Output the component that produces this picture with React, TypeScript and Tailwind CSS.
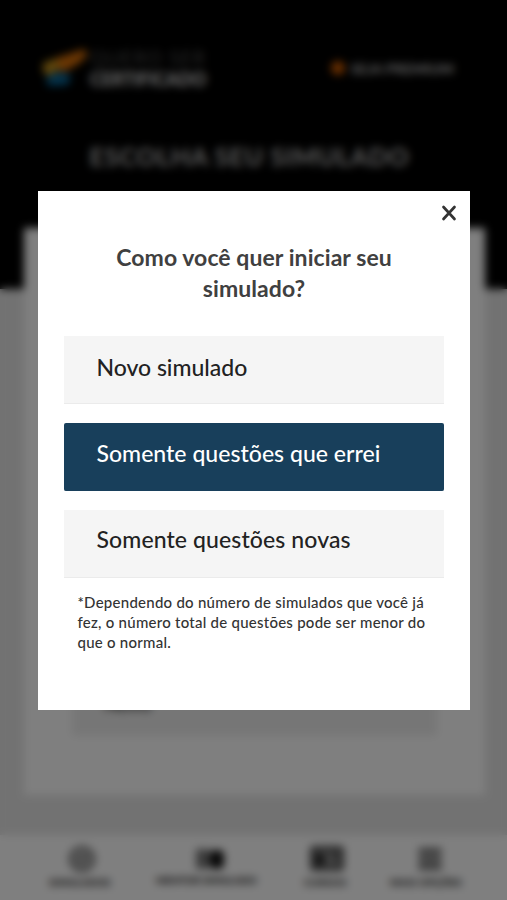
import clsx from "clsx";
import { CircleCheck, Menu } from "lucide-react";

const options = [
  { label: "Novo simulado", spacing: "tracking-[-0.02px]", offset: "pb-1" },
  { label: "Somente questões que errei", spacing: "tracking-[0.03px]", offset: "pb-1.5", active: true },
  { label: "Somente questões novas", spacing: "tracking-[0.11px]", offset: "pb-2" },
];

function Logo() {
  return (
    <div className="flex items-center gap-0.5">
      <svg width="46" height="40" viewBox="0 0 46 40">
        <path d="M1 15L15 10L19 20L7 28L1 24Z" fill="#c08d18" />
        <path d="M14 10L42 1L46 6L38 15L20 25Z" fill="#d86f08" />
        <path d="M4 29L16 24L29 27L26 37L6 38Z" fill="#086596" />
      </svg>
      <div className="w-[118px]">
        <p className="text-[19px] leading-[18px] tracking-[1.2px] whitespace-nowrap text-[#555]">QUERO SER</p>
        <p className="mt-[3px] text-[18px] leading-[18px] font-black tracking-[-0.2px] text-[#ddd]">CERTIFICADO</p>
      </div>
    </div>
  );
}

function CourseIcon() {
  return (
    <svg width="36" height="28" viewBox="0 0 36 28" fill="none">
      <rect x="3" y="3" width="30" height="21" rx="2" fill="#888" stroke="#444" strokeWidth="4" />
      <path d="M7 9H15V20H7Z" fill="#111" />
      <path d="M22 9H27V16" stroke="#444" strokeWidth="3" />
    </svg>
  );
}

function Page() {
  return (
    <div className="flex h-full flex-col bg-[linear-gradient(black_289px,#e5e5e5_289px)]">
      <header className="flex h-[136px] shrink-0 items-center justify-between pr-[53px] pl-[42px]">
        <Logo />
        <div className="flex items-center gap-1.5 text-[14px] font-bold tracking-[0.2px] text-[#ccc]">
          <span className="size-3.5 rounded-full bg-[#d65f00]" />
          SEJA PREMIUM
        </div>
      </header>
      <h1 className="mr-2 h-[92px] shrink-0 pt-0.5 text-center text-[25px] leading-[36px] font-bold tracking-[0.75px] whitespace-nowrap text-[#bbb]">
        ESCOLHA SEU SIMULADO
      </h1>
      <main className="mr-[22px] ml-[24px] flex h-[567px] shrink-0 flex-col justify-end bg-white px-12 pb-[59px]">
        <div className="h-[68px] bg-[#ededed] px-8 pt-5 text-[20px] leading-[30px] text-black">Novo</div>
      </main>
      <nav className="mt-auto flex h-[65px] shrink-0 justify-between bg-white pr-[45px] pl-[49px] text-[10px] font-black whitespace-nowrap text-[#111]">
        <div className="flex flex-col items-center gap-0.5 pt-2.5">
          <CircleCheck className="ml-1 size-7 fill-[#bbb] text-[#666]" strokeWidth={2.5} />
          <span className="tracking-[0.3px]">SIMULADOS</span>
        </div>
        <div className="flex flex-col items-center pt-2.5">
          <div className="flex h-7 items-center pl-2">
            <span className="h-5 w-3.5 bg-[#777]" />
            <span className="h-[19px] w-3.5 rounded-[5px] bg-[#111]" />
          </div>
          <span className="tracking-[0.1px]">MENTOR SIMULADO</span>
        </div>
        <div className="-mr-0.5 ml-0.5 flex flex-col items-center gap-0.5 pt-2.5">
          <div className="pl-1">
            <CourseIcon />
          </div>
          <span className="tracking-[0.5px]">CURSOS</span>
        </div>
        <div className="flex flex-col items-center gap-0.5 pt-2.5">
          <div className="pl-2">
            <Menu className="size-7 text-[#555]" strokeWidth={4.5} />
          </div>
          <span className="tracking-[0.4px]">MAIS OPÇÕES</span>
        </div>
      </nav>
    </div>
  );
}

function StartModal() {
  return (
    <div
      role="dialog"
      className="mt-[191px] flex h-[519px] w-[432px] flex-col bg-white px-[26px] text-[#333]"
    >
      <div className="-mr-[13px] flex h-[51px] justify-end pt-[13px]">
        <button aria-label="Fechar" className="h-[18px]">
          <svg width="16" height="18" viewBox="0 0 16 18">
            <path d="M2.5 3L13.5 15M13.5 3L2.5 15" stroke="#333" strokeWidth="2.7" strokeLinecap="round" />
          </svg>
        </button>
      </div>
      <h2 className="h-[94px] pl-px text-center text-[23px] leading-[31px] font-bold tracking-[0.07px] whitespace-nowrap text-[#404040]">
        Como você quer iniciar seu
        <br />
        simulado?
      </h2>
      <div className="flex flex-col gap-[19px]">
        {options.map((option) => (
          <button
            key={option.label}
            className={clsx(
              "h-[68px] border-b pl-[33px] text-left text-[23px] font-medium whitespace-nowrap",
              option.spacing,
              option.offset,
              option.active
                ? "rounded-[2px] border-[#183f5b] bg-[#183f5b] text-white"
                : "border-[#ebebeb] bg-[#f5f5f5] text-[#222]"
            )}
          >
            {option.label}
          </button>
        ))}
      </div>
      <p className="mt-[14px] pl-[14px] text-[15px] leading-[20px] font-medium tracking-[0.25px] whitespace-nowrap">
        *Dependendo do número de simulados que você já
        <br />
        fez, o número total de questões pode ser menor do
        <br />
        que o normal.
      </p>
    </div>
  );
}

export default function App() {
  return (
    <div className="relative h-[900px] w-[507px] overflow-hidden font-['Lato',sans-serif]">
      <Page />
      <div className="absolute inset-0 flex items-start justify-center bg-black/50 backdrop-blur-[4px]">
        <StartModal />
      </div>
    </div>
  );
}
